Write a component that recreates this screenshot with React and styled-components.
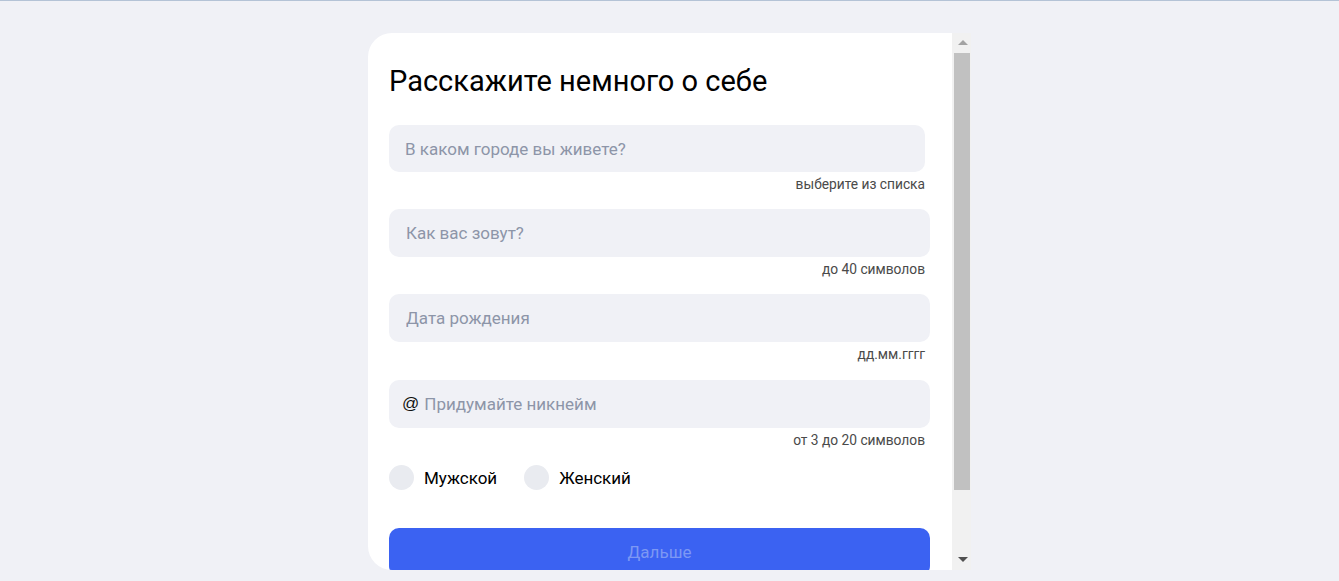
import React from "react";
import styled, { createGlobalStyle } from "styled-components";

const Global = createGlobalStyle`
  html, body { margin: 0; padding: 0; }
  body {
    background: #f0f1f6;
    font-family: Roboto, "Liberation Sans", Arial, sans-serif;
    border-top: 1px solid #b4c3d6;
    height: 580px;
    overflow: hidden;
  }
  * { box-sizing: border-box; }
`;

const Page = styled.div`
  display: flex;
  justify-content: center;
  padding-top: 32px;
`;

const Card = styled.div`
  display: flex;
  width: 603px;
  height: 537px;
  background: #fff;
  border-radius: 24px 0 0 24px;
  overflow: hidden;
`;

const Content = styled.div`
  flex: 1;
  overflow: hidden;
`;

const ScrollBar = styled.div`
  display: flex;
  flex-direction: column;
  width: 19px;
  background: #f1f1f1;
`;

const ArrowButton = styled.div`
  display: flex;
  align-items: center;
  justify-content: center;
  height: 17px;
  padding-left: 2px;
  padding-top: ${(p) => (p.$down ? 0 : 2)}px;
  padding-bottom: ${(p) => (p.$down ? 4 : 0)}px;
`;

const Track = styled.div`
  flex: 1;
  padding: 3px 1px 0 2px;
`;

const Thumb = styled.div`
  height: 437px;
  background: #c1c1c1;
`;

const Inner = styled.form`
  display: flex;
  flex-direction: column;
  padding: 31px 22px 75px 21px;
`;

const Title = styled.h1`
  margin: 0 0 27px;
  font-size: 29px;
  font-weight: 400;
  line-height: 34px;
  color: #000;
`;

const Field = styled.div`
  display: flex;
  flex-direction: column;
  margin-bottom: ${(p) => p.$gap}px;
`;

const InputBox = styled.label`
  display: flex;
  align-items: center;
  height: ${(p) => p.$h}px;
  width: ${(p) => p.$w}px;
  padding-left: ${(p) => p.$pl}px;
  background: #f0f1f6;
  border-radius: 10px;
`;

const At = styled.span`
  font-size: 17px;
  color: #111;
  margin-right: 5px;
  font-family: "Liberation Sans", Arial, sans-serif;
`;

const Input = styled.input`
  flex: 1;
  border: none;
  outline: none;
  background: transparent;
  font-family: Roboto, sans-serif;
  font-size: 17px;
  color: #111;
  padding: 0;
  &::placeholder { color: #8d95a8; }
`;

const Hint = styled.div`
  margin-top: 5px;
  align-self: flex-end;
  padding-right: 5px;
  font-size: 13.75px;
  line-height: 15px;
  color: #4a4a4a;
`;

const RadioRow = styled.div`
  display: flex;
  align-items: center;
  gap: 27px;
  margin: 17px 0 38px;
`;

const Radio = styled.label`
  display: flex;
  align-items: center;
  gap: 10px;
  font-size: 17px;
  color: #000;
  cursor: pointer;
`;

const Dot = styled.span`
  width: 25px;
  height: 25px;
  border-radius: 50%;
  background: #e9ebf0;
`;

const Button = styled.button`
  height: 48px;
  border: none;
  border-radius: 10px;
  background: #3b62f2;
  color: #7d98f4;
  font-family: Roboto, sans-serif;
  font-size: 17px;
  cursor: default;
`;

const fields = [
  { ph: "В каком городе вы живете?", hint: "выберите из списка", w: 536, h: 47, pl: 16, gap: 17 },
  { ph: "Как вас зовут?", hint: "до 40 символов", w: 541, h: 48, pl: 17, gap: 17 },
  { ph: "Дата рождения", hint: "дд.мм.гггг", w: 541, h: 48, pl: 17, gap: 18 },
  { ph: "Придумайте никнейм", hint: "от 3 до 20 символов", w: 541, h: 48, pl: 13, gap: 0, at: true },
];

export default function App() {
  return (
    <>
      <Global />
      <Page>
        <Card>
          <Content>
            <Inner onSubmit={(e) => e.preventDefault()}>
              <Title>Расскажите немного о себе</Title>
              {fields.map((f) => (
                <Field key={f.ph} $gap={f.gap}>
                  <InputBox $w={f.w} $h={f.h} $pl={f.pl}>
                    {f.at && <At>@</At>}
                    <Input placeholder={f.ph} />
                  </InputBox>
                  <Hint>{f.hint}</Hint>
                </Field>
              ))}
              <RadioRow>
                <Radio><Dot />Мужской</Radio>
                <Radio><Dot />Женский</Radio>
              </RadioRow>
              <Button type="button">Дальше</Button>
            </Inner>
          </Content>
          <ScrollBar>
            <ArrowButton>
              <svg width="10" height="5" viewBox="0 0 10 5"><polygon points="0,5 5,0 10,5" fill="#a3a3a3" /></svg>
            </ArrowButton>
            <Track><Thumb /></Track>
            <ArrowButton $down>
              <svg width="10" height="5" viewBox="0 0 10 5"><polygon points="0,0 10,0 5,5" fill="#505050" /></svg>
            </ArrowButton>
          </ScrollBar>
        </Card>
      </Page>
    </>
  );
}
